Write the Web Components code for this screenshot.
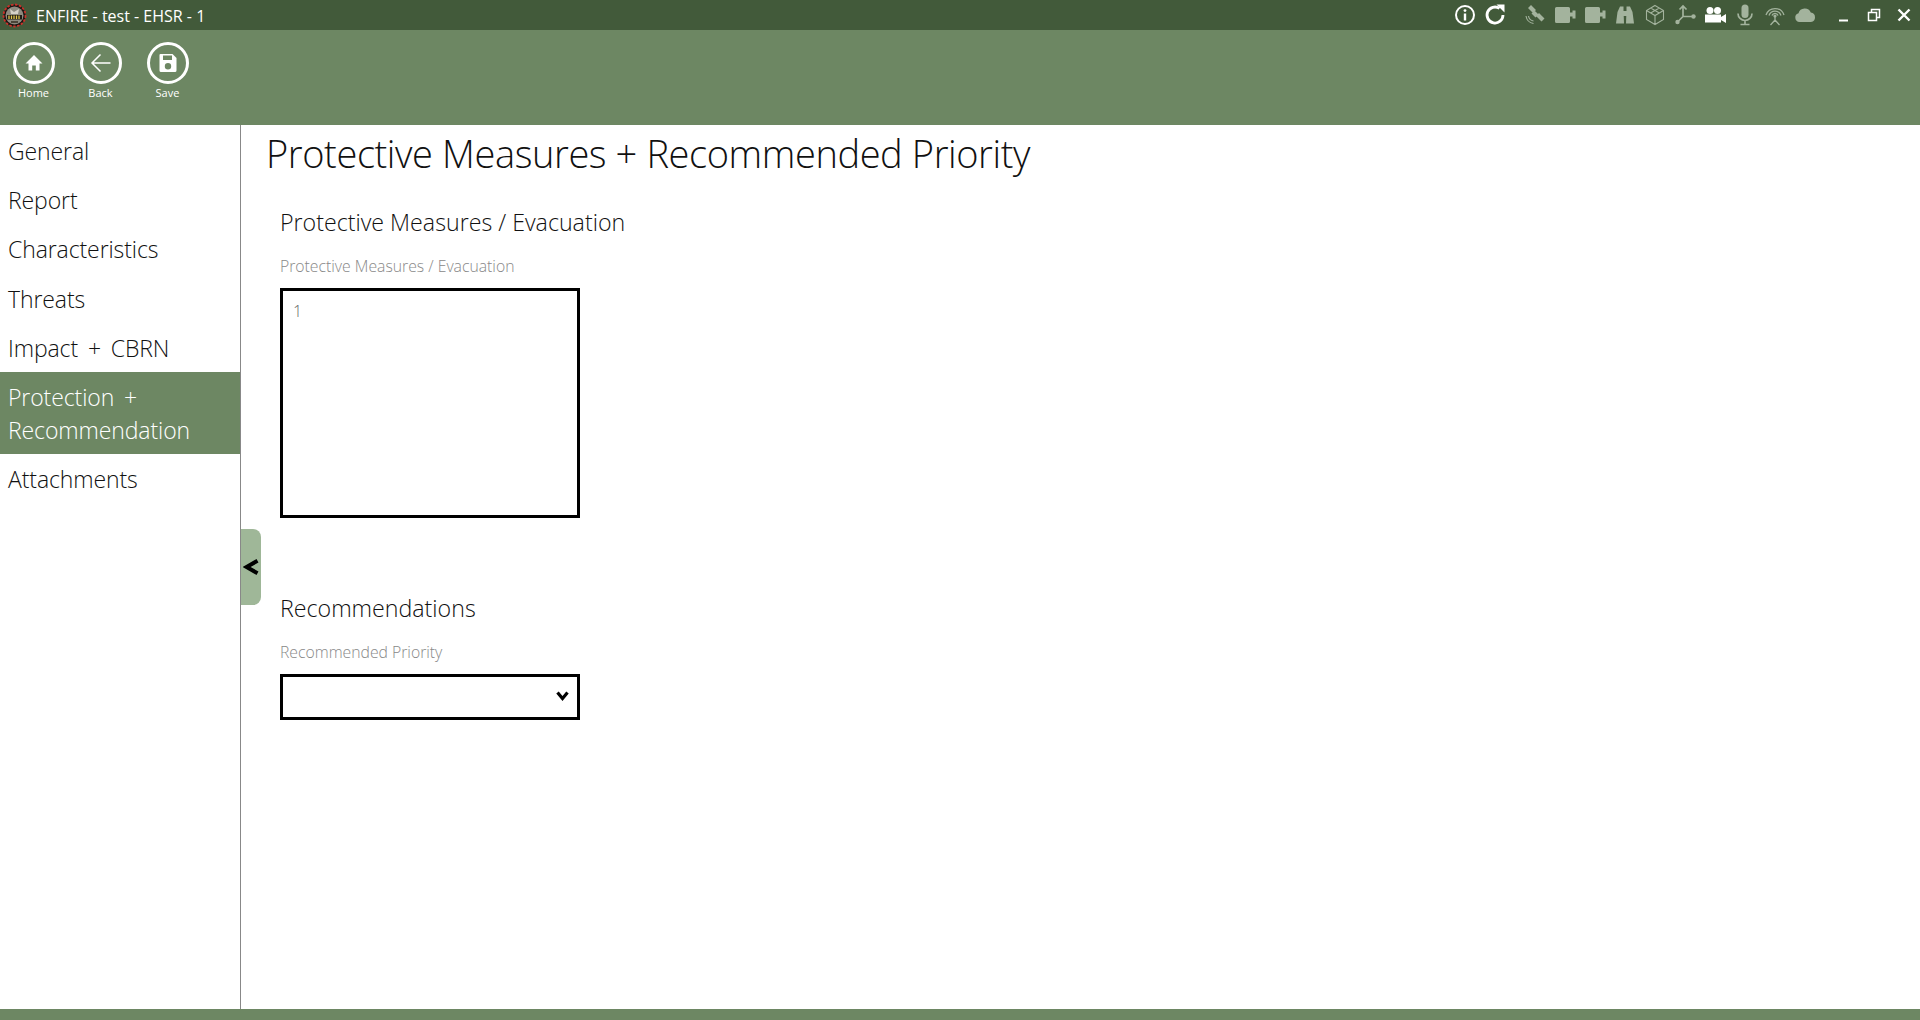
<!DOCTYPE html>
<html lang="en">
<head>
<meta charset="utf-8">
<title>ENFIRE - test - EHSR - 1</title>
<style>
    html, body { margin: 0; height: 100%; overflow: hidden; background: #fff; }
    body { font-family: "Open Sans", "Noto Sans", sans-serif; font-weight: 300; color: #111; }
</style>
</head>
<body>
<enfire-app>
    <title-bar slot="titlebar">ENFIRE - test - EHSR - 1</title-bar>
    <tool-bar slot="toolbar">
        <tool-button icon="home">Home</tool-button>
        <tool-button icon="back">Back</tool-button>
        <tool-button icon="save">Save</tool-button>
    </tool-bar>
    <side-nav slot="nav">
        <nav-item>General</nav-item>
        <nav-item>Report</nav-item>
        <nav-item>Characteristics</nav-item>
        <nav-item>Threats</nav-item>
        <nav-item>Impact + CBRN</nav-item>
        <nav-item active>Protection + Recommendation</nav-item>
        <nav-item>Attachments</nav-item>
    </side-nav>
    <page-body heading="Protective Measures + Recommended Priority">
        <form-section heading="Protective Measures / Evacuation" style="height:386px">
            <form-field label="Protective Measures / Evacuation">
                <textarea>1</textarea>
            </form-field>
        </form-section>
        <form-section heading="Recommendations">
            <form-field label="Recommended Priority" kind="select"></form-field>
        </form-section>
    </page-body>
</enfire-app>

<script>
(function() {
    "use strict";

    const icons = {
        home: '<path d="M12 4 3.500 12.500H6.500V19.500H10.200V14.500H13.800V19.500H17.500V12.500H20.500Z" fill="#fff"/>',
        back: '<path d="M21.500 12H3.500M11.500 3.500 3 12 11.500 20.500" fill="none" stroke="#fff" stroke-width="1.500"/>',
        save: '<path fill-rule="evenodd" d="M4.500 3H16.500L20.500 7V19.500A1.500 1.500 0 0 1 19 21H5A1.500 1.500 0 0 1 3.500 19.500V4A1 1 0 0 1 4.500 3ZM7 4.500V9H16V4.500ZM12 12A3.200 3.200 0 1 0 12 18.400 3.200 3.200 0 0 0 12 12Z" fill="#fff"/>'
    };

    const videoIcon = '<path d="M2 5.500A1.500 1.500 0 0 1 3.500 4H15.500A1.500 1.500 0 0 1 17 5.500V9.500H19.500V7.500H22.500V15.500H19.500V13.500H17V18.500A1.500 1.500 0 0 1 15.500 20H3.500A1.500 1.500 0 0 1 2 18.500Z" fill="currentColor"/>';

    // dim = the tool is not available right now
    const statusIcons = [
        { svg: '<circle cx="12" cy="12" r="9" fill="none" stroke="#fff" stroke-width="2"/><circle cx="12" cy="7.600" r="1.400" fill="#fff"/><rect x="10.800" y="10.500" width="2.400" height="7" fill="#fff"/>' },
        { svg: '<path d="M20 12A8 8 0 1 1 16.500 5.400" fill="none" stroke="#fff" stroke-width="2.800"/><path d="M13.500 1.500H21.500V9.500Z" fill="#fff"/>' },
        { dim: 1, svg: '<path d="M8 2 13 7 10 10 5 5ZM16 10 21.500 15.500 18.500 18.500 13 13ZM11.500 7.500 15.500 11.500 12.500 14.500 8.500 10.500Z" fill="currentColor"/><path d="M3 13A9 9 0 0 0 10.500 20.500M5.500 13A6 6 0 0 0 10.500 18" fill="none" stroke="currentColor" stroke-width="1.100"/>' },
        { dim: 1, svg: videoIcon },
        { dim: 1, svg: videoIcon },
        { dim: 1, svg: '<path d="M7 3.500H10.500V7L11 20.500H3L4.500 9ZM13.500 3.500H17L19.500 9 21 20.500H13L13.500 7ZM10.500 8H13.500V13H10.500Z" fill="currentColor"/>' },
        { dim: 1, svg: '<path d="M12 2.500 20.500 7.500V16.500L12 21.500 3.500 16.500V7.500ZM3.500 7.500 12 12.500 20.500 7.500M12 12.500V21.500M7.700 5 16.300 10M16.300 5 7.700 10" fill="none" stroke="currentColor" stroke-width="1.100"/>' },
        { dim: 1, svg: '<path d="M10 3V13.500L4.500 19M10 13.500H20M6.500 6.500 10 3 13.500 6.500" fill="none" stroke="currentColor" stroke-width="1.700"/><circle cx="20.500" cy="13.500" r="2.200" fill="currentColor"/><circle cx="4.500" cy="19" r="2.200" fill="currentColor"/>' },
        { svg: '<circle cx="7" cy="7.500" r="3.500" fill="#fff"/><circle cx="14.500" cy="7.500" r="3.500" fill="#fff"/><path d="M2 11.500H18V14L23 11V20L18 17V19.500H2Z" fill="#fff"/>' },
        { dim: 1, svg: '<rect x="8.500" y="1.500" width="7" height="13.500" rx="3.500" fill="currentColor"/><path d="M5 10.500A7 7 0 0 0 19 10.500M12 17.500V21M7.500 21.500H16.500" fill="none" stroke="currentColor" stroke-width="1.700"/>' },
        { dim: 1, svg: '<path d="M3 12A9.500 9.500 0 0 1 21 12M6 12.500A6.300 6.300 0 0 1 18 12.500M9 12.500A3.200 3.200 0 0 1 15 12.500M12 13V17M12 17 7.500 22M12 17 16.500 22" fill="none" stroke="currentColor" stroke-width="1.300"/><circle cx="12" cy="13" r="1.600" fill="currentColor"/>' },
        { dim: 1, svg: '<path d="M6.500 19A4.500 4.500 0 0 1 5.500 10.200 6.500 6.500 0 0 1 17.800 9.500 4.800 4.800 0 0 1 18 19Z" fill="currentColor"/>' }
    ];

    const titleTemplate = document.createElement('template');
    titleTemplate.innerHTML = `
        <style>
            :host { display: flex; align-items: center; height: 30px; background: #425a3a; color: #fff; font-size: 16px; }
            .logo { margin-left: 2px; margin-right: 9px; flex: none; }
            .name { flex: 1; white-space: nowrap; font-weight: 400; position: relative; top: 1px; }
            .tools { display: flex; }
            .tools svg { display: block; width: 24px; height: 24px; margin-left: 6px; color: #a3b39d; }
            .tools svg:nth-child(3) { margin-left: 16px; }
            .caption { display: flex; margin-left: 12px; margin-right: 1px; }
            .caption svg { display: block; width: 30px; height: 30px; }
        </style>
        <svg class="logo" width="25" height="25" viewBox="0 0 25 25">
            <circle cx="12.500" cy="12.500" r="11" fill="#1c1512" stroke="#c9312a" stroke-width="1.800" stroke-dasharray="2.500 1.500"/>
            <circle cx="12.500" cy="12.500" r="9" fill="#8d8a7f"/>
            <path d="M5 12H20V16.500H5Z" fill="#1f1c15"/>
            <path d="M7 12.500V16M9.500 12.500V16M12 12.500V16M14.500 12.500V16M17 12.500V16" stroke="#e2c94e" stroke-width="1.300"/>
            <path d="M8 6 12 9 17 6 16 11H9Z" fill="#d5d2c8"/>
            <path d="M9 18H16V20H9Z" fill="#4a4438"/>
        </svg>
        <span class="name"><slot></slot></span>
        <div class="tools"></div>
        <div class="caption">
            <svg viewBox="0 0 30 30"><path d="M10 20.500H19" stroke="#fff" stroke-width="2"/></svg>
            <svg viewBox="0 0 30 30"><path d="M9.500 12.500H17.500V20.500H9.500ZM12.500 12.500V9.500H20.500V17.500H17.500" fill="none" stroke="#fff" stroke-width="1.500"/></svg>
            <svg viewBox="0 0 30 30"><path d="M9.500 9.500 20.500 20.500M20.500 9.500 9.500 20.500" stroke="#fff" stroke-width="2.400"/></svg>
        </div>
    `;

    class TitleBar extends HTMLElement {
        constructor() {
            super();
            this.attachShadow({mode: 'open'}).appendChild(titleTemplate.content.cloneNode(true));
            const tools = this.shadowRoot.querySelector('.tools');
            tools.innerHTML = statusIcons.map(i =>
                `<svg viewBox="0 0 24 24" style="${i.dim ? '' : 'color:#fff'}">${i.svg}</svg>`).join('');
        }
    }
    window.customElements.define('title-bar', TitleBar);

    class ToolBar extends HTMLElement {
        constructor() {
            super();
            this.attachShadow({mode: 'open'}).innerHTML = `
                <style>
                    :host { display: flex; height: 95px; box-sizing: border-box; background: #6d8763; }
                </style>
                <slot></slot>
            `;
        }
    }
    window.customElements.define('tool-bar', ToolBar);

    class ToolButton extends HTMLElement {
        constructor() {
            super();
            this.attachShadow({mode: 'open'}).innerHTML = `
                <style>
                    :host { display: flex; flex-direction: column; align-items: center; width: 67px; color: #fff; font-size: 11px; font-weight: 400; }
                    .ring { box-sizing: border-box; width: 42px; height: 42px; margin-top: 12px; border: 3px solid #fff; border-radius: 50%; display: flex; align-items: center; justify-content: center; }
                    svg { width: 24px; height: 24px; display: block; }
                    .label { line-height: 16px; margin-top: 1px; }
                </style>
                <div class="ring"><svg viewBox="0 0 24 24">${icons[this.getAttribute('icon')]}</svg></div>
                <div class="label"><slot></slot></div>
            `;
        }
    }
    window.customElements.define('tool-button', ToolButton);

    class SideNav extends HTMLElement {
        constructor() {
            super();
            this.attachShadow({mode: 'open'}).innerHTML = `
                <style>
                    :host { display: block; width: 241px; flex: none; box-sizing: border-box; padding-top: 1px; border-right: 1px solid #888; position: relative; }
                    .toggle { position: absolute; left: 241px; top: 404px; width: 20px; height: 76px; background: #9fb798; border-radius: 0 8px 8px 0; display: flex; align-items: center; justify-content: center; }
                </style>
                <slot></slot>
                <div class="toggle">
                    <svg width="16" height="16" viewBox="0 0 16 16"><path d="M14.500 1.800 3.500 8 14.500 14.200" fill="none" stroke="#000" stroke-width="4"/></svg>
                </div>
            `;
        }
    }
    window.customElements.define('side-nav', SideNav);

    class NavItem extends HTMLElement {
        constructor() {
            super();
            this.attachShadow({mode: 'open'}).innerHTML = `
                <style>
                    :host { display: block; padding: 9px 8px 7px; font-size: 23px; letter-spacing: -0.1px; word-spacing: 4px; line-height: 33.200px; color: #111; }
                    :host([active]) { background: #6d8763; color: #fff; }
                </style>
                <slot></slot>
            `;
        }
    }
    window.customElements.define('nav-item', NavItem);

    class PageBody extends HTMLElement {
        constructor() {
            super();
            this.attachShadow({mode: 'open'}).innerHTML = `
                <style>
                    :host { display: block; flex: 1; box-sizing: border-box; padding: 0 26px 0 25px; }
                    h1 { margin: 0; padding-top: 3px; font-size: 38px; letter-spacing: -0.4px; line-height: 50px; font-weight: 300; color: #111; white-space: nowrap; }
                    .sections { padding-left: 14px; padding-top: 27px; }
                </style>
                <h1>${this.getAttribute('heading')}</h1>
                <div class="sections"><slot></slot></div>
            `;
        }
    }
    window.customElements.define('page-body', PageBody);

    class FormSection extends HTMLElement {
        constructor() {
            super();
            this.attachShadow({mode: 'open'}).innerHTML = `
                <style>
                    :host { display: block; }
                    h2 { margin: 0; font-size: 23.200px; line-height: 34px; font-weight: 300; color: #111; }
                </style>
                <h2>${this.getAttribute('heading')}</h2>
                <slot></slot>
            `;
        }
    }
    window.customElements.define('form-section', FormSection);

    class FormField extends HTMLElement {
        constructor() {
            super();
            const select = this.getAttribute('kind') === 'select';
            this.attachShadow({mode: 'open'}).innerHTML = `
                <style>
                    :host { display: block; width: 300px; }
                    label { display: block; margin-top: 16px; font-size: 15.750px; line-height: 22px; color: #888; white-space: nowrap; }
                    .box { margin-top: 11px; position: relative; }
                    select { display: block; box-sizing: border-box; width: 300px; height: 46px; border: 3px solid #000; background: #fff; appearance: none; border-radius: 0; }
                    .chev { position: absolute; right: 10px; top: 15px; }
                    ::slotted(textarea) { display: block; box-sizing: border-box; width: 300px; height: 230px; border: 3px solid #000; border-radius: 0; padding: 8px 10px; margin: 0; resize: none; outline: none; font: 300 16px/24px "Open Sans", sans-serif; color: #666; }
                </style>
                <label>${this.getAttribute('label')}</label>
                <div class="box">
                    ${select ? `<select><option></option></select>
                    <svg class="chev" width="14" height="14" viewBox="0 0 14 14"><path d="M1.500 3.500 6.500 9.500 11.500 3.500" fill="none" stroke="#000" stroke-width="3.200"/></svg>` : '<slot></slot>'}
                </div>
            `;
        }
    }
    window.customElements.define('form-field', FormField);

    class EnfireApp extends HTMLElement {
        constructor() {
            super();
            this.attachShadow({mode: 'open'}).innerHTML = `
                <style>
                    :host { display: flex; flex-direction: column; height: 100vh; }
                    main { flex: 1; display: flex; min-height: 0; }
                    footer { height: 11px; flex: none; background: #6d8763; }
                </style>
                <slot name="titlebar"></slot>
                <slot name="toolbar"></slot>
                <main>
                    <slot name="nav"></slot>
                    <slot></slot>
                </main>
                <footer></footer>
            `;
        }
    }
    window.customElements.define('enfire-app', EnfireApp);
})();
</script>
</body>
</html>
